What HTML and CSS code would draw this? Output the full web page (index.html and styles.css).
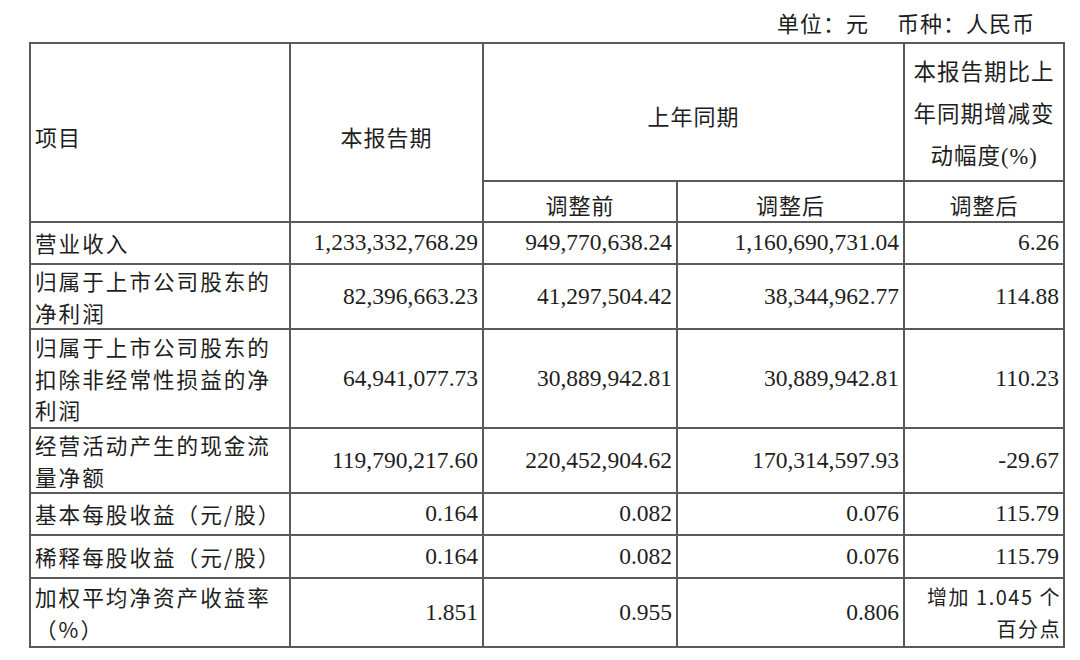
FILE: index.html
```html
<!DOCTYPE html>
<html lang="zh-CN">
<head>
<meta charset="utf-8">
<title>主要会计数据</title>
<link rel="stylesheet" href="styles.css">
</head>
<body>
<div class="page">
  <div class="unit"><span>单位：元</span><span class="gap">币种：人民币</span></div>
  <table class="fin">
    <colgroup>
      <col class="c1"><col class="c2"><col class="c3"><col class="c4"><col class="c5">
    </colgroup>
    <thead>
      <tr class="h1">
        <th rowspan="2" class="left">项目</th>
        <th rowspan="2">本报告期</th>
        <th colspan="2">上年同期</th>
        <th class="pct">本报告期比上<br>年同期增减变<br>动幅度(%)</th>
      </tr>
      <tr class="h2">
        <th>调整前</th>
        <th>调整后</th>
        <th>调整后</th>
      </tr>
    </thead>
    <tbody>
      <tr class="r1">
        <td class="item">营业收入</td>
        <td class="num">1,233,332,768.29</td>
        <td class="num">949,770,638.24</td>
        <td class="num">1,160,690,731.04</td>
        <td class="num">6.26</td>
      </tr>
      <tr class="r2">
        <td class="item">归属于上市公司股东的<br>净利润</td>
        <td class="num">82,396,663.23</td>
        <td class="num">41,297,504.42</td>
        <td class="num">38,344,962.77</td>
        <td class="num">114.88</td>
      </tr>
      <tr class="r3">
        <td class="item">归属于上市公司股东的<br>扣除非经常性损益的净<br>利润</td>
        <td class="num">64,941,077.73</td>
        <td class="num">30,889,942.81</td>
        <td class="num">30,889,942.81</td>
        <td class="num">110.23</td>
      </tr>
      <tr class="r4">
        <td class="item">经营活动产生的现金流<br>量净额</td>
        <td class="num">119,790,217.60</td>
        <td class="num">220,452,904.62</td>
        <td class="num">170,314,597.93</td>
        <td class="num">-29.67</td>
      </tr>
      <tr class="r5">
        <td class="item">基本每股收益（元/股）</td>
        <td class="num">0.164</td>
        <td class="num">0.082</td>
        <td class="num">0.076</td>
        <td class="num">115.79</td>
      </tr>
      <tr class="r6">
        <td class="item">稀释每股收益（元/股）</td>
        <td class="num">0.164</td>
        <td class="num">0.082</td>
        <td class="num">0.076</td>
        <td class="num">115.79</td>
      </tr>
      <tr class="r7">
        <td class="item">加权平均净资产收益率<br>（%）</td>
        <td class="num">1.851</td>
        <td class="num">0.955</td>
        <td class="num">0.806</td>
        <td class="num note">增加 1.045 个<br>百分点</td>
      </tr>
    </tbody>
  </table>
</div>
</body>
</html>
```
FILE: styles.css
```css
html, body {
  margin: 0;
  padding: 0;
  background: #ffffff;
}

body {
  font-family: "Liberation Serif", "Noto Sans CJK SC", serif;
  color: #1e1e1e;
}

.page {
  width: 1080px;
  height: 660px;
  padding: 0 0 0 29px;
  box-sizing: border-box;
}

.unit {
  width: 1006px;
  height: 42px;
  box-sizing: border-box;
  padding-top: 6px;
  text-align: right;
  font-family: "Noto Sans CJK SC", sans-serif;
  font-size: 22px;
  letter-spacing: 1px;
  line-height: 32px;
}

.unit .gap {
  margin-left: 28px;
}

.fin {
  border-collapse: collapse;
  table-layout: fixed;
  width: 1034px;
}

.c1 { width: 260px; }
.c2 { width: 193px; }
.c3 { width: 194px; }
.c4 { width: 227px; }
.c5 { width: 160px; }

.fin th,
.fin td {
  border: 2px solid #5a5a5a;
  padding: 0 4px;
  font-weight: normal;
}

.fin th {
  font-family: "Noto Sans CJK SC", sans-serif;
  font-size: 22px;
  letter-spacing: 1px;
  text-align: center;
  vertical-align: middle;
  line-height: 32px;
  padding-top: 6px;
}

.fin th.left {
  text-align: left;
}

.fin th.pct {
  font-family: "Liberation Serif", "Noto Sans CJK SC", serif;
  font-size: 22.5px;
  letter-spacing: 1px;
  line-height: 42px;
  padding-top: 6px;
  padding-bottom: 0;
}

.h1 { height: 138px; }
.h2 { height: 41px; }

.h2 th { padding-top: 4px; }

.fin td {
  vertical-align: middle;
  padding-top: 0;
  padding-bottom: 0;
}

.item {
  font-family: "Noto Sans CJK SC", sans-serif;
  font-size: 21.6px;
  letter-spacing: 2px;
  line-height: 31.5px;
  text-align: left;
}

.num {
  font-size: 23.5px;
  line-height: 31.5px;
  text-align: right;
  padding-right: 3px;
  padding-top: 2px;
}

.num.note {
  font-family: "Noto Sans CJK SC", sans-serif;
  font-size: 20px;
  letter-spacing: 1.5px;
  line-height: 32px;
  padding-top: 0;
  padding-right: 2px;
}

.r1 { height: 42px; }
.r2 { height: 65px; }
.r3 { height: 99px; }
.r4 { height: 64px; }
.r5 { height: 42px; }
.r6 { height: 43px; }
.r7 { height: 69px; }
```
